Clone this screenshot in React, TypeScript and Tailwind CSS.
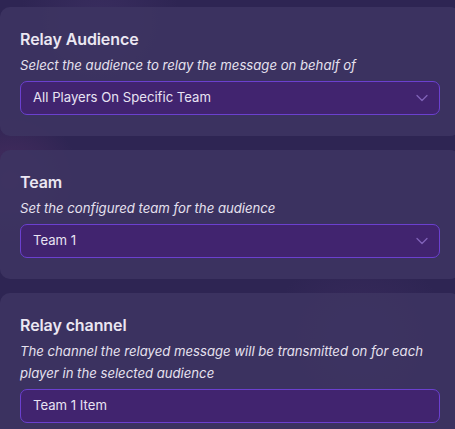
import React from "react";

function Chevron() {
  return (
    <svg width="12" height="8" viewBox="0 0 12 8" fill="none" className="shrink-0">
      <path d="M1 1.5 L6 6.5 L11 1.5" stroke="#8063b8" strokeWidth="1.3" strokeLinecap="round" strokeLinejoin="round" />
    </svg>
  );
}

function Card({
  title,
  desc,
  value,
  select,
}: {
  title: string;
  desc: React.ReactNode;
  value: string;
  select: boolean;
}) {
  return (
    <div className="w-[460px] shrink-0 rounded-[10px] bg-[#3d3462]/90 px-5 pt-5 pb-[21px]">
      <div className="text-[16px] leading-[24px] font-semibold tracking-[-0.1px] text-[#ebe7f2]">{title}</div>
      <div className="mt-[3px] text-[13.15px] leading-[22px] italic text-[#e6e1ef]">{desc}</div>
      <div className="mt-[5px] flex h-[34px] w-[420px] items-center justify-between rounded-[7px] border border-[#6b40cf] bg-[#41246f] pl-[12px] pr-[11px]">
        <span className="text-[13.15px] text-[#e8e3f3]">{value}</span>
        {select && <Chevron />}
      </div>
    </div>
  );
}

export default function App() {
  return (
    <div
      className="relative h-[429px] w-[455px] overflow-hidden bg-[#2e2553]"
      style={{ fontFamily: "Inter, 'Noto Sans', sans-serif" }}
    >
      <div className="pointer-events-none absolute inset-0 bg-[radial-gradient(circle_at_10px_180px,rgba(120,60,120,0.35),transparent_70px),radial-gradient(circle_at_360px_340px,rgba(90,60,120,0.25),transparent_90px),radial-gradient(circle_at_100px_20px,rgba(90,70,130,0.25),transparent_80px)]" />
      <div className="relative flex flex-col gap-[14px] pt-[7px]">
        <Card
          title="Relay Audience"
          desc="Select the audience to relay the message on behalf of"
          value="All Players On Specific Team"
          select
        />
        <Card
          title="Team"
          desc="Set the configured team for the audience"
          value="Team 1"
          select
        />
        <Card
          title="Relay channel"
          desc={
            <>
              The channel the relayed message will be transmitted on for each
              <br />
              player in the selected audience
            </>
          }
          value="Team 1 Item"
          select={false}
        />
      </div>
    </div>
  );
}
